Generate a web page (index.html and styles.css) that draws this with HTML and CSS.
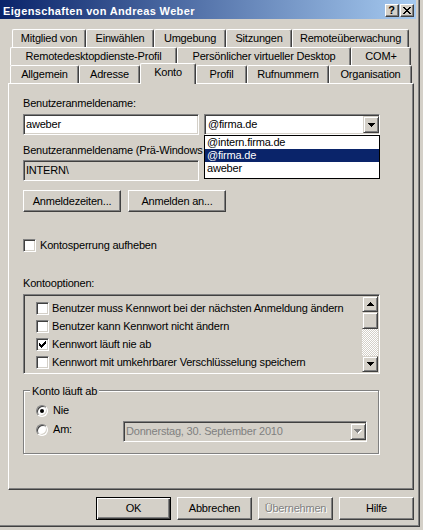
FILE: index.html
```html
<!DOCTYPE html>
<html lang="de">
<head>
<meta charset="utf-8">
<title>Eigenschaften von Andreas Weber</title>
<link rel="stylesheet" href="styles.css">
</head>
<body>
<div class="window">
  <div class="titlebar">
    <span class="title">Eigenschaften von Andreas Weber</span>
    <div class="caption-buttons">
      <span class="cap-btn help">?</span>
      <span class="cap-btn close"><svg width="8" height="7" viewBox="0 0 8 7"><path d="M0 0h2v1h-2z M6 0h2v1h-2z M1 1h2v1h-2z M5 1h2v1h-2z M2 2h4v1h-4z M3 3h2v1h-2z M2 4h4v1h-4z M1 5h2v1h-2z M5 5h2v1h-2z M0 6h2v1h-2z M6 6h2v1h-2z"/></svg></span>
    </div>
  </div>

  <div class="tabstrip">
    <div class="tabrow row1">
      <div class="tab">Mitglied von</div>
      <div class="tab">Einwählen</div>
      <div class="tab">Umgebung</div>
      <div class="tab">Sitzungen</div>
      <div class="tab">Remoteüberwachung</div>
    </div>
    <div class="tabrow row2">
      <div class="tab">Remotedesktopdienste-Profil</div>
      <div class="tab">Persönlicher virtueller Desktop</div>
      <div class="tab">COM+</div>
    </div>
    <div class="tabrow row3">
      <div class="tab">Allgemein</div>
      <div class="tab">Adresse</div>
      <div class="tab active">Konto</div>
      <div class="tab">Profil</div>
      <div class="tab">Rufnummern</div>
      <div class="tab">Organisation</div>
    </div>
  </div>

  <div class="panel">
    <div class="label">Benutzeranmeldename:</div>
    <div class="field-row">
      <div class="field"><span class="field-text">aweber</span></div>
      <div class="combo-wrap">
        <div class="field combo">
          <span class="field-text">@firma.de</span>
          <span class="drop-btn"><svg width="7" height="4" viewBox="0 0 7 4"><path d="M0 0h7v1h-1v1h-1v1h-1v1h-1v-1h-1v-1h-1v-1h-1z"/></svg></span>
        </div>
        <div class="dropdown">
          <div class="dd-item">@intern.firma.de</div>
          <div class="dd-item selected">@firma.de</div>
          <div class="dd-item">aweber</div>
        </div>
      </div>
    </div>

    <div class="label label-pre">Benutzeranmeldename (Prä-Windows 2000):</div>
    <div class="field readonly field-pre"><span class="field-text">INTERN\</span></div>

    <div class="button-row">
      <div class="btn btn-wide">Anmeldezeiten...</div>
      <div class="btn btn-wide">Anmelden an...</div>
    </div>

    <div class="check-row unlock">
      <span class="checkbox"></span>
      <span>Kontosperrung aufheben</span>
    </div>

    <div class="label label-options">Kontooptionen:</div>
    <div class="listbox">
      <div class="list-items">
        <div class="list-item"><span class="checkbox"></span><span>Benutzer muss Kennwort bei der nächsten Anmeldung ändern</span></div>
        <div class="list-item"><span class="checkbox"></span><span>Benutzer kann Kennwort nicht ändern</span></div>
        <div class="list-item"><span class="checkbox"><svg width="7" height="7" viewBox="0 0 7 7"><path d="M6 0h1v1h-1z M5 1h2v1h-2z M0 2h1v1h-1z M4 2h3v1h-3z M0 3h2v1h-2z M3 3h3v1h-3z M0 4h5v1h-5z M1 5h3v1h-3z M2 6h1v1h-1z"/></svg></span><span>Kennwort läuft nie ab</span></div>
        <div class="list-item"><span class="checkbox"></span><span>Kennwort mit umkehrbarer Verschlüsselung speichern</span></div>
      </div>
      <div class="scrollbar">
        <div class="sb-btn"><svg width="7" height="4" viewBox="0 0 7 4"><path d="M3 0h1v1h1v1h1v1h1v1h-7v-1h1v-1h1v-1h1z"/></svg></div>
        <div class="sb-thumb"></div>
        <div class="sb-track"></div>
        <div class="sb-btn"><svg width="7" height="4" viewBox="0 0 7 4"><path d="M0 0h7v1h-1v1h-1v1h-1v1h-1v-1h-1v-1h-1v-1h-1z"/></svg></div>
      </div>
    </div>

    <div class="group">
      <div class="legend">Konto läuft ab</div>
      <div class="radio-row first">
        <span class="radio checked"><span class="dot"></span></span>
        <span>Nie</span>
      </div>
      <div class="date-row">
        <div class="radio-row">
          <span class="radio"></span>
          <span>Am:</span>
        </div>
        <div class="field readonly datepicker">
          <span class="field-text disabled-text">Donnerstag, 30. September 2010</span>
          <span class="drop-btn"><svg width="8" height="5" viewBox="0 0 8 5"><path fill="#fff" d="M1 1h7v1h-1v1h-1v1h-1v1h-1v-1h-1v-1h-1v-1h-1z"/><path fill="#808080" d="M0 0h7v1h-1v1h-1v1h-1v1h-1v-1h-1v-1h-1v-1h-1z"/></svg></span>
        </div>
      </div>
    </div>
  </div>

  <div class="footer">
    <div class="btn btn-foot default">OK</div>
    <div class="btn btn-foot">Abbrechen</div>
    <div class="btn btn-foot disabled">Übernehmen</div>
    <div class="btn btn-foot">Hilfe</div>
  </div>
</div>
</body>
</html>
```

FILE: styles.css
```css
* { box-sizing: border-box; }

html, body { margin: 0; padding: 0; }

body {
  width: 423px;
  height: 530px;
  overflow: hidden;
  background: #d4d0c8;
  font-family: "Liberation Sans", Arial, sans-serif;
  font-size: 11px;
  line-height: 13px;
  letter-spacing: -0.2px;
  color: #000;
  white-space: nowrap;
}

.window {
  width: 420px;
  height: 527px;
  background: #d4d0c8;
  border-right: 1px solid #404040;
  border-bottom: 1px solid #404040;
  box-shadow: inset -1px -1px 0 #808080;
  display: flex;
  flex-direction: column;
}

/* Title bar */
.titlebar {
  width: 416px;
  height: 19px;
  flex: none;
  background: linear-gradient(to right, #0a246a, #a6caf0);
  display: flex;
  justify-content: space-between;
  align-items: flex-start;
  padding: 4px 2px 0 3px;
}

.title {
  color: #fff;
  font-weight: bold;
  letter-spacing: 0.35px;
  padding-top: 1px;
}

.caption-buttons { display: flex; gap: 1px; }

.cap-btn {
  width: 14px;
  height: 13px;
  background: #d4d0c8;
  border: 1px solid;
  border-color: #fff #404040 #404040 #fff;
  box-shadow: inset -1px -1px 0 #808080;
  display: flex;
  align-items: center;
  justify-content: center;
}

.help {
  font-weight: bold;
  font-size: 11px;
  line-height: 11px;
  letter-spacing: 0;
  padding-right: 1px;
}

.close svg { display: block; margin-right: 1px; }

/* Tabs */
.tabstrip {
  margin-top: 10px;
  display: flex;
  flex-direction: column;
  flex: none;
}

.tabrow { display: grid; height: 18px; }
.row1 { margin-left: 12px; grid-template-columns: 74px 68px 72px 66px 117px; }
.row2 { margin-left: 10px; grid-template-columns: 167px 174px 60px; }
.row3 { margin-left: 10px; grid-template-columns: 69px 61px 56px 51px 82px 83px; }

.tab {
  height: 18px;
  background: #d4d0c8;
  border-top: 1px solid #fff;
  border-left: 1px solid #fff;
  border-right: 1px solid #404040;
  border-radius: 2px 2px 0 0;
  box-shadow: inset -1px 0 0 #808080;
  padding-top: 2px;
  text-align: center;
}

.tab.active {
  height: 21px;
  margin: -2px 0 -1px;
  position: relative;
  z-index: 1;
}

/* Panel */
.panel {
  margin-left: 8px;
  width: 406px;
  height: 407px;
  flex: none;
  border: 1px solid;
  border-color: #fff #404040 #404040 #fff;
  box-shadow: inset -1px -1px 0 #808080;
  padding: 13px 0 0 14px;
  display: flex;
  flex-direction: column;
  align-items: flex-start;
}

.field-row {
  display: flex;
  gap: 5px;
  margin-top: 4px;
}

.field {
  width: 176px;
  height: 21px;
  background: #fff;
  border: 1px solid;
  border-color: #808080 #fff #fff #808080;
  box-shadow: inset 1px 1px 0 #404040, inset -1px -1px 0 #d4d0c8;
  padding: 1px 1px 1px 2px;
  display: flex;
  align-items: center;
}

.field-text { flex: 1; overflow: hidden; }

.field.readonly { background: #d4d0c8; }

.combo-wrap { position: relative; }

.combo { padding-left: 3px; }

.drop-btn {
  width: 16px;
  height: 17px;
  flex: none;
  background: #d4d0c8;
  border: 1px solid;
  border-color: #d4d0c8 #404040 #404040 #d4d0c8;
  box-shadow: inset 1px 1px 0 #fff, inset -1px -1px 0 #808080;
  display: flex;
  align-items: center;
  justify-content: center;
  margin-right: -1px;
}

.drop-btn svg { display: block; }

.dropdown {
  position: absolute;
  top: 100%;
  left: 0;
  width: 176px;
  height: 44px;
  background: #fff;
  border: 1px solid #000;
  z-index: 2;
}

.dd-item {
  height: 13px;
  line-height: 13px;
  padding-left: 2px;
}

.dd-item.selected { background: #0a246a; color: #fff; }

.label-pre { margin-top: 9px; }

.field-pre { margin-top: 3px; }

.button-row {
  display: flex;
  gap: 7px;
  margin-top: 9px;
}

.btn {
  background: #d4d0c8;
  border: 1px solid;
  border-color: #fff #404040 #404040 #fff;
  box-shadow: inset -1px -1px 0 #808080;
  display: flex;
  align-items: center;
  justify-content: center;
}

.btn-wide { width: 98px; height: 22px; }

.check-row {
  display: flex;
  align-items: center;
  gap: 4px;
}

.unlock { margin-top: 27px; }

.checkbox {
  width: 13px;
  height: 13px;
  flex: none;
  background: #fff;
  border: 1px solid;
  border-color: #808080 #fff #fff #808080;
  box-shadow: inset 1px 1px 0 #404040, inset -1px -1px 0 #d4d0c8;
  display: flex;
  align-items: center;
  justify-content: center;
}

.checkbox svg { display: block; }

.label-options { margin-top: 25px; }

.listbox {
  margin-top: 4px;
  width: 357px;
  height: 80px;
  border: 1px solid;
  border-color: #808080 #fff #fff #808080;
  box-shadow: inset 1px 1px 0 #404040, inset -1px -1px 0 #d4d0c8;
  padding: 1px;
  display: flex;
}

.list-items {
  flex: 1;
  padding: 3px 0 0 11px;
  overflow: hidden;
}

.list-item {
  height: 18px;
  display: flex;
  align-items: center;
  gap: 3px;
}

.scrollbar {
  width: 16px;
  display: flex;
  flex-direction: column;
}

.sb-btn, .sb-thumb {
  background: #d4d0c8;
  border: 1px solid;
  border-color: #d4d0c8 #404040 #404040 #d4d0c8;
  box-shadow: inset 1px 1px 0 #fff, inset -1px -1px 0 #808080;
}

.sb-btn {
  height: 16px;
  display: flex;
  align-items: center;
  justify-content: center;
}

.sb-btn svg { display: block; }

.sb-thumb { height: 17px; }

.sb-track {
  flex: 1;
  background: repeating-conic-gradient(#fff 0 25%, #d4d0c8 0 50%) 0 0 / 2px 2px;
}

/* Group box */
.group {
  margin-top: 16px;
  width: 356px;
  height: 64px;
  border: 1px solid #808080;
  box-shadow: inset 1px 1px 0 #fff, 1px 1px 0 #fff;
  padding: 0 11px 0 12px;
  display: flex;
  flex-direction: column;
}

.legend {
  align-self: flex-start;
  margin: -6px 0 0 -6px;
  padding: 0 2px;
  background: #d4d0c8;
}

.radio-row {
  display: flex;
  align-items: center;
  gap: 5px;
  height: 13px;
}

.radio-row.first { margin-top: 6px; }

.radio {
  width: 12px;
  height: 12px;
  flex: none;
  border-radius: 50%;
  background: #fff;
  border: 1px solid;
  border-color: #808080 #fff #fff #808080;
  box-shadow: inset 1px 1px 0 #404040, inset -1px -1px 0 #d4d0c8;
  display: flex;
  align-items: center;
  justify-content: center;
}

.dot {
  width: 4px;
  height: 4px;
  border-radius: 50%;
  background: #000;
}

.date-row {
  display: flex;
  align-items: flex-start;
  margin-top: 4px;
}

.date-row .radio-row { margin-top: 2px; }

.datepicker {
  width: 244px;
  margin-left: auto;
}

.disabled-text { color: #808080; }

/* Footer buttons */
.footer {
  margin-top: 7px;
  display: flex;
  justify-content: flex-end;
  gap: 6px;
  padding-right: 5px;
}

.btn-foot { width: 75px; height: 23px; }

.btn.default {
  border: 1px solid #000;
  box-shadow: inset 1px 1px 0 #fff, inset -1px -1px 0 #404040, inset -2px -2px 0 #808080;
}

.btn.disabled {
  color: #808080;
  text-shadow: 1px 1px 0 #fff;
}
```
